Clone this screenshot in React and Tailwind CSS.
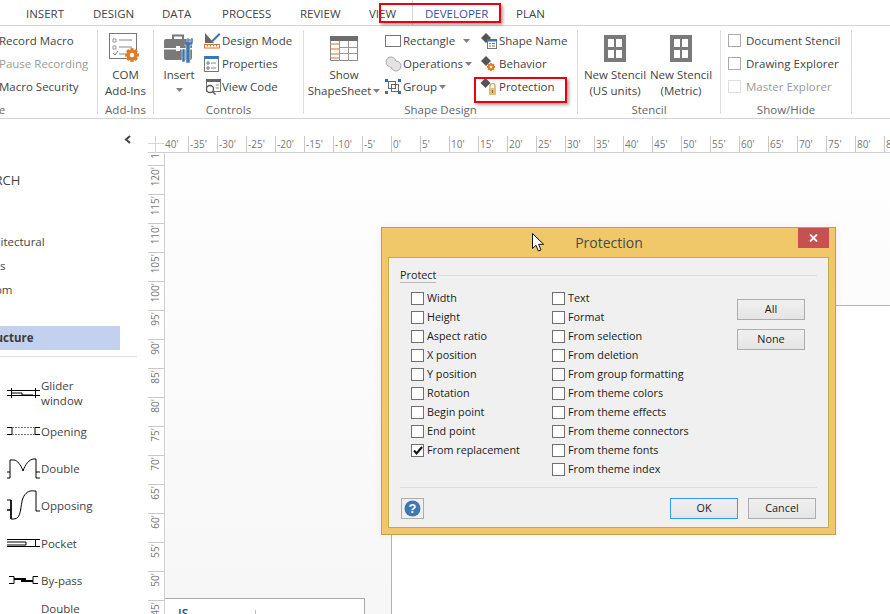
import React from "react";

const ui = { fontFamily: '"Open Sans","Noto Sans",sans-serif' };

function Diamond({ x = 0, y = 0, s = 5, c = "#555" }) {
  return <path d={`M${x} ${y - s}L${x + s} ${y}L${x} ${y + s}L${x - s} ${y}Z`} fill={c} />;
}
function Gear({ cx, cy, r, c = "#e07b28" }) {
  const spokes = [0, 45, 90, 135];
  return (
    <g>
      {spokes.map((a) => (
        <rect key={a} x={cx - r * 0.3} y={cy - r * 1.25} width={r * 0.6} height={r * 2.5} fill={c} transform={`rotate(${a} ${cx} ${cy})`} />
      ))}
      <circle cx={cx} cy={cy} r={r} fill={c} />
      <circle cx={cx} cy={cy} r={r * 0.4} fill="#fff" />
    </g>
  );
}

const ComIcon = () => (
  <svg width="33" height="32" viewBox="0 0 33 32">
    <rect x="0.5" y="0.5" width="27" height="25" fill="#fff" stroke="#777" />
    <path d="M4 6h3v3H4zM4 13h3v3H4z" fill="none" stroke="#999" />
    <path d="M4 20l2 2 3-4" fill="none" stroke="#777" />
    <path d="M10 7h13M10 14h13M10 21h6" stroke="#888" />
    <Gear cx="23" cy="22" r="5.5" />
  </svg>
);
const InsertIcon = () => (
  <svg width="31" height="31" viewBox="0 0 31 31">
    <path d="M9 6V2.5h10V6" fill="none" stroke="#777" strokeWidth="2" />
    <rect x="0" y="6" width="28" height="21" rx="2" fill="#7a7a7a" />
    <rect x="0" y="15" width="28" height="1.5" fill="#fff" />
    <rect x="12" y="13" width="4" height="5" fill="#fff" />
    <path d="M20 12h2v18h4V12h2l1-2V5h-2v4h-2V5h-2v4" fill="#3a78b5" stroke="#fff" strokeWidth="0.5" />
    <rect x="18" y="16" width="3" height="13" fill="#3a78b5" stroke="#fff" strokeWidth="0.5" />
  </svg>
);
const DesignIcon = () => (
  <svg width="17" height="17" viewBox="0 0 17 17">
    <path d="M1 1v10h9Z" fill="#666" />
    <path d="M8 8l7-7 1.5 1.5-7 7L7 10Z" fill="#3a78b5" />
    <rect x="0.5" y="12.5" width="15" height="3.5" fill="#fff" stroke="#d9702a" />
    <path d="M3.5 13v1.5M6.5 13v1.5M9.5 13v1.5M12.5 13v1.5" stroke="#d9702a" />
  </svg>
);
const PropertiesIcon = () => (
  <svg width="15" height="16" viewBox="0 0 15 16">
    <rect x="0.5" y="0.5" width="14" height="15" fill="#fff" stroke="#777" />
    <rect x="0" y="0" width="15" height="3" fill="#3a78b5" />
    <path d="M3 6h2v2H3zM3 11h2v2H3z" fill="none" stroke="#777" />
    <path d="M7 7h5M7 12h5" stroke="#888" />
  </svg>
);
const ViewCodeIcon = () => (
  <svg width="17" height="16" viewBox="0 0 17 16">
    <rect x="2.5" y="0.5" width="14" height="12" fill="#fff" stroke="#777" />
    <rect x="2" y="0" width="15" height="3" fill="#666" />
    <path d="M12 6h3M12 9h3" stroke="#888" />
    <circle cx="6" cy="10" r="3.5" fill="#fff" stroke="#555" strokeWidth="1.3" />
    <path d="M8.5 12.5l3 3" stroke="#555" strokeWidth="1.5" />
  </svg>
);
const SheetIcon = () => (
  <svg width="28" height="25" viewBox="0 0 28 25">
    <rect x="0" y="0" width="28" height="25" fill="#fff" />
    <rect x="0" y="0" width="28" height="5" fill="#6d6d6d" />
    <path d="M0.5 5v19.5h27V5" fill="none" stroke="#888" />
    <path d="M9.5 5v20M18.5 5v20M10 11.5h18M10 17.5h18" stroke="#999" />
    <path d="M1 8h8M1 13h8M1 18h8M1 22h8" stroke="#d9702a" strokeWidth="1" />
  </svg>
);
const RectIcon = () => (
  <svg width="16" height="12" viewBox="0 0 16 12">
    <rect x="0.5" y="0.5" width="15" height="11" fill="#fff" stroke="#777" />
  </svg>
);
const OpsIcon = () => (
  <svg width="17" height="16" viewBox="0 0 17 16">
    <rect x="1" y="1" width="10" height="10" rx="5" fill="#e3e3e3" stroke="#aaa" />
    <rect x="6" y="5" width="10" height="10" rx="5" fill="#e3e3e3" stroke="#aaa" />
    <rect x="5" y="5" width="6" height="6" fill="#e3e3e3" />
  </svg>
);
const GroupIcon = () => (
  <svg width="16" height="15" viewBox="0 0 16 15">
    <rect x="3.5" y="2.5" width="7" height="7" fill="none" stroke="#666" />
    <rect x="6.5" y="5.5" width="7" height="7" fill="none" stroke="#666" />
    <path d="M0 0h3v3H0zM13 0h3v3h-3zM0 12h3v3H0zM13 12h3v3h-3z" fill="#2f6fb5" />
  </svg>
);
const NameIcon = () => (
  <svg width="18" height="16" viewBox="0 0 18 16">
    <Diamond x={6} y={5} s={5} />
    <rect x="7.5" y="6.5" width="9" height="9" fill="#fff" stroke="#777" />
    <rect x="7" y="6" width="10" height="2.5" fill="#3a78b5" />
    <path d="M9 10.5h2M12 10.5h3M9 13h2M12 13h3" stroke="#777" />
  </svg>
);
const BehaviorIcon = () => (
  <svg width="18" height="16" viewBox="0 0 18 16">
    <Diamond x={6} y={5} s={5} />
    <Gear cx="11" cy="11" r="3.2" />
  </svg>
);
const LockIcon = () => (
  <svg width="18" height="18" viewBox="0 0 18 18">
    <Diamond x={5.5} y={5} s={5} />
    <path d="M10 10V8a2.5 2.5 0 015 0v2" fill="none" stroke="#b8a070" strokeWidth="1.2" />
    <rect x="9" y="10" width="7" height="7" fill="#e3bf6d" />
    <rect x="12" y="12" width="1" height="3" fill="#8a6f30" />
  </svg>
);
const StencilIcon = () => (
  <svg width="22" height="27" viewBox="0 0 22 27">
    <rect width="22" height="27" fill="#7a7a7a" />
    <path d="M4 4h6v8H4zM12 4h6v8h-6zM4 15h6v8H4zM12 15h6v8h-6z" fill="#fff" />
  </svg>
);

const Caret = ({ className = "" }) => (
  <svg width="7" height="4" viewBox="0 0 7 4" className={className}>
    <path d="M0 0h7L3.5 4Z" fill="#808080" />
  </svg>
);

function SmallRow({ icon, children, iconW, disabled, extra }) {
  return (
    <div className={`h-[23px] flex items-center whitespace-nowrap ${disabled ? "text-[#9a9a9a]" : ""}`}>
      {icon && <span className="flex items-center shrink-0" style={{ width: iconW }}>{icon}</span>}
      <span>{children}</span>
      {extra}
    </div>
  );
}

function Group({ w, label, children }) {
  return (
    <div className="shrink-0 h-[84px] mt-[4px] flex flex-col border-r border-[#dcdcdc]" style={{ width: w }}>
      <div className="flex-1 min-h-0 flex">{children}</div>
      <div className="h-[15px] -mb-[3px] flex items-center justify-center text-[#666] text-[11.5px] leading-none">{label}</div>
    </div>
  );
}

function BigBtn({ icon, lines, w, caret, iconH = 37 }) {
  return (
    <div className="flex flex-col items-center shrink-0 leading-[16px]" style={{ width: w }}>
      <div className="flex items-center justify-center" style={{ height: iconH }}>{icon}</div>
      {lines.map((l) => (
        <div key={l} className="whitespace-nowrap">{l}</div>
      ))}
      {caret}
    </div>
  );
}

const topLabels = [];
for (let v = -35; v <= 85; v += 5) topLabels.push(v);
const leftLabels = [];
for (let v = 120; v >= 45; v -= 5) leftLabels.push(v);

const col1 = [
  ["Width"], ["Height"], ["Aspect ratio"], ["X position"], ["Y position"], ["Rotation"], ["Begin point"], ["End point"], ["From replacement", true],
];
const col2 = ["Text", "Format", "From selection", "From deletion", "From group formatting", "From theme colors", "From theme effects", "From theme connectors", "From theme fonts", "From theme index"];

function Check({ label, checked }) {
  return (
    <div className="h-[19px] flex items-center whitespace-nowrap">
      <span className="w-[13px] h-[13px] border border-[#707070] bg-white flex items-center justify-center shrink-0">
        {checked && (
          <svg width="10" height="9" viewBox="0 0 10 9">
            <path d="M1 4.5l2.6 3L9 1" fill="none" stroke="#111" strokeWidth="2" />
          </svg>
        )}
      </span>
      <span className="ml-[3px]">{label}</span>
    </div>
  );
}

function DlgBtn({ children, w = 68, focus }) {
  return (
    <div
      className={`h-[21px] flex items-center justify-center border bg-linear-to-b from-[#f0f0f0] to-[#e5e5e5] ${focus ? "border-[#3399ff]" : "border-[#adadad]"}`}
      style={{ width: w }}
    >
      {children}
    </div>
  );
}

function Stencil({ h, icon, children }) {
  return (
    <div className="flex items-center shrink-0" style={{ height: h }}>
      <span className="w-[41px] flex justify-center pl-[5px] shrink-0">{icon}</span>
      <span className="leading-[15px]">{children}</span>
    </div>
  );
}

export default function App() {
  return (
    <div className="w-[890px] h-[614px] relative overflow-hidden bg-white flex flex-col text-[#444] text-[11.5px]" style={ui}>
      {/* Tabs */}
      <div className="h-[26px] shrink-0 border-b border-[#d4d4d4] flex items-center text-[#444] pl-[26px] whitespace-nowrap">
        <span className="w-[67px] pt-[3px]">INSERT</span>
        <span className="w-[69px] pt-[3px]">DESIGN</span>
        <span className="w-[60px] pt-[3px]">DATA</span>
        <span className="w-[78px] pt-[3px]">PROCESS</span>
        <span className="w-[69px] pt-[3px]">REVIEW</span>
        <span className="w-[43px] pt-[3px]">VIEW</span>
        <span className="w-[104px] text-[#34539f] h-[25px] flex items-center border-l border-[#d4d4d4] pl-[12px] pt-[3px]">DEVELOPER</span>
        <span className="pt-[3px]">PLAN</span>
      </div>

      {/* Ribbon */}
      <div className="h-[93px] shrink-0 border-b border-[#d4d4d4] flex">
        <Group w={98} label={<span className="-ml-[93px]">e</span>}>
          <div className="-mt-[1px] -ml-[1px]">
            <SmallRow>Record Macro</SmallRow>
            <SmallRow disabled>Pause Recording</SmallRow>
            <SmallRow>Macro Security</SmallRow>
          </div>
        </Group>
        <Group w={56} label="Add-Ins">
          <BigBtn w={55} icon={<ComIcon />} lines={["COM", "Add-Ins"]} />
        </Group>
        <Group w={150} label="Controls">
          <BigBtn w={50} icon={<InsertIcon />} lines={["Insert"]} caret={<Caret className="mt-[5px]" />} />
          <div className="-mt-[1px]">
            <SmallRow icon={<DesignIcon />} iconW={18}>Design Mode</SmallRow>
            <SmallRow icon={<PropertiesIcon />} iconW={18}>Properties</SmallRow>
            <SmallRow icon={<ViewCodeIcon />} iconW={18}>View Code</SmallRow>
          </div>
        </Group>
        <Group w={274} label="Shape Design">
          <BigBtn
            w={80}
            icon={<SheetIcon />}
            lines={["Show"]}
            caret={
              <div className="flex items-center whitespace-nowrap">
                ShapeSheet<Caret className="ml-[2px]" />
              </div>
            }
          />
          <div className="w-[96px] -mt-[1px] pl-[1px]">
            <SmallRow icon={<RectIcon />} iconW={18} extra={<Caret className="ml-[8px]" />}>Rectangle</SmallRow>
            <SmallRow icon={<OpsIcon />} iconW={18} extra={<Caret className="ml-[2px]" />}>Operations</SmallRow>
            <SmallRow icon={<GroupIcon />} iconW={18} extra={<Caret className="ml-[2px]" />}>Group</SmallRow>
          </div>
          <div className="-mt-[1px]">
            <SmallRow icon={<NameIcon />} iconW={19}>Shape Name</SmallRow>
            <SmallRow icon={<BehaviorIcon />} iconW={19}>Behavior</SmallRow>
            <SmallRow icon={<LockIcon />} iconW={19}>Protection</SmallRow>
          </div>
        </Group>
        <Group w={143} label="Stencil">
          <div className="flex pl-[4px]">
            <BigBtn w={66} icon={<StencilIcon />} lines={["New Stencil", "(US units)"]} />
            <BigBtn w={66} icon={<StencilIcon />} lines={["New Stencil", "(Metric)"]} />
          </div>
        </Group>
        <Group w={131} label="Show/Hide">
          <div className="pl-[7px] -mt-[1px]">
            {[
              ["Document Stencil", false],
              ["Drawing Explorer", false],
              ["Master Explorer", true],
            ].map(([t, d]) => (
              <div key={t} className={`h-[23px] flex items-center whitespace-nowrap ${d ? "text-[#9a9a9a]" : ""}`}>
                <span className={`w-[13px] h-[13px] border ${d ? "border-[#dedede]" : "border-[#ababab]"} mr-[5px]`} />
                {t}
              </div>
            ))}
          </div>
        </Group>
      </div>

      {/* Main */}
      <div className="flex-1 min-h-0 flex">
        {/* Stencil pane */}
        <div className="w-[148px] shrink-0 flex flex-col overflow-hidden text-[#444]">
          <div className="h-[27px] shrink-0 pr-[16px] flex items-end justify-end pb-[2px]">
            <svg width="8" height="9" viewBox="0 0 8 9">
              <path d="M6 1L2 4.5 6 8" fill="none" stroke="#444" strokeWidth="2" />
            </svg>
          </div>
          <div className="h-[24px] shrink-0 mt-[23px] flex items-center text-[13px] -ml-[28px]">SEARCH</div>
          <div className="h-[24px] shrink-0 mt-[37px] flex items-center -ml-[24px] whitespace-nowrap">Architectural</div>
          <div className="h-[24px] shrink-0 flex items-center -ml-[27px]">Doors</div>
          <div className="h-[24px] shrink-0 flex items-center -ml-[29px]">Custom</div>
          <div className="h-[24px] shrink-0 mt-[24px] w-[120px] bg-[#c3d0f0] flex items-center font-bold text-[#3c3c3c] overflow-hidden whitespace-nowrap">
            <span className="-ml-[21px]">Structure</span>
          </div>
          <div className="h-[1px] w-[137px] mt-[6px] bg-[#dcdcdc] shrink-0" />
          <div className="pt-[21px] shrink-0 flex flex-col">
            <Stencil h={30} icon={<svg width="33" height="10" viewBox="0 0 33 10"><path d="M0 2.5h33M0 7.5h33M4.5 0v10M28.5 0v10M4 5h11v2h11" fill="none" stroke="#000" /></svg>}>Glider<br />window</Stencil>
            <div className="h-[13px] shrink-0" />
            <Stencil h={20} icon={<svg width="33" height="8" viewBox="0 0 33 8"><path d="M0 .5h5v7H0M33 .5h-5v7h5" fill="none" stroke="#000" /><path d="M5 .5h23M5 7.5h23" stroke="#777" strokeDasharray="2 1" /></svg>}>Opening</Stencil>
            <div className="h-[17px] shrink-0" />
            <Stencil h={20} icon={<svg width="33" height="22" viewBox="0 0 33 22"><path d="M0 21h3v-6H0M3 15V3h4C10 3 14 8 16 14 18 8 22 2 27 2h2v13M33 21h-4v-6h4" fill="none" stroke="#000" /></svg>}>Double</Stencil>
            <div className="h-[17px] shrink-0" />
            <Stencil h={20} icon={<svg width="33" height="30" viewBox="0 0 33 30"><path d="M0 10h4v19h3c8 0 6-14 9-21 2-5 6-8 11-7h2v20h4" fill="none" stroke="#000" /><path d="M0 20h4M4 10v19" stroke="#000" strokeWidth="1.5" /></svg>}>Opposing</Stencil>
            <div className="h-[18px] shrink-0" />
            <Stencil h={20} icon={<svg width="33" height="8" viewBox="0 0 33 8"><path d="M0 .5h33M0 7.5h33M28.5 0v8M0 3h19v3H0" fill="none" stroke="#000" /></svg>}>Pocket</Stencil>
            <div className="h-[17px] shrink-0" />
            <Stencil h={20} icon={<svg width="33" height="8" viewBox="0 0 33 8"><path d="M2 .5h5v7H2M31 .5h-5v7h5" fill="none" stroke="#000" /><path d="M7 3h12M14 5h12" stroke="#000" strokeWidth="2" /></svg>}>By-pass</Stencil>
            <div className="h-[8px] shrink-0" />
            <Stencil h={20} icon={<svg width="33" height="12" viewBox="0 0 33 12" className="mt-[12px]"><ellipse cx="9" cy="10" rx="3" ry="1.5" /><ellipse cx="22" cy="10" rx="3" ry="1.5" /></svg>}>Double</Stencil>
          </div>
        </div>

        {/* Rulers and canvas */}
        <div className="flex-1 min-w-0 flex flex-col pt-[17px]">
          <div className="h-[17px] shrink-0 flex border-b border-[#d0d0d0] text-[10px] text-[#777] leading-none overflow-hidden">
            <div className="w-[16px] shrink-0 relative">
              <div className="absolute left-0 right-0 top-[7px] h-[1px] bg-[#cdd6f0]" />
              <div className="absolute top-0 bottom-0 left-[7px] w-[1px] bg-[#cdd6f0]" />
            </div>
            <div className="w-[24px] shrink-0 pl-[1px] pt-[3px]">40'</div>
            {topLabels.map((v) => (
              <div key={v} className="w-[29px] shrink-0 border-l border-[#c8c8c8] pl-[1px] pt-[3px]">{v}'</div>
            ))}
          </div>
          <div className="flex-1 min-h-0 flex">
            <div className="w-[17px] shrink-0 border-r border-[#d0d0d0] text-[10px] text-[#777] leading-none overflow-hidden">
              <div className="h-[13px] border-b border-[#c8c8c8] flex justify-center items-start overflow-hidden pr-[2px]">
                <span className="[writing-mode:vertical-rl] rotate-180">1</span>
              </div>
              {leftLabels.map((v) => (
                <div key={v} className="h-[29px] border-b border-[#c8c8c8] flex justify-center items-start pt-[1px] pr-[2px]">
                  <span className="[writing-mode:vertical-rl] rotate-180">{v}'</span>
                </div>
              ))}
            </div>
            <div className="flex-1 min-w-0 relative flex flex-col pl-[226px] pt-[152px] bg-linear-to-b from-[#fefefe] to-[#f7f7f7]">
              <div className="flex-1 bg-white border-l border-t border-[#b4b4b4]" />
              <div className="absolute left-0 top-[445px] w-[200px] h-[30px] bg-white border-t border-r border-[#aaaaaa]">
                <span className="absolute left-[13px] top-[9px] text-[12px] font-semibold text-[#2b4fa0] leading-none">IS</span>
                <span className="absolute left-[90px] top-[11px] h-[10px] w-[1px] bg-[#bbb]" />
              </div>
            </div>
          </div>
        </div>
      </div>

      {/* Red callouts */}
      <div className="absolute left-[379px] top-[3px] w-[122px] h-[20px] border-2 border-[#e60012] shadow-[2px_2px_3px_rgba(0,0,0,0.35)]" />
      <div className="absolute left-[474px] top-[77px] w-[93px] h-[26px] border-2 border-[#e60012] shadow-[2px_2px_3px_rgba(0,0,0,0.35)]" />

      {/* Dialog */}
      <div className="absolute left-[381px] top-[227px] w-[455px] h-[308px] bg-[#f0c869] border border-[#c0a050] flex flex-col text-[10.8px] text-[#1a1a1a] shadow-[0_0_8px_rgba(0,0,0,0.06)]">
        <div className="h-[29px] shrink-0 relative flex items-center justify-center text-[14px] text-[#4a4a4a] pl-[1px]">
          Protection
          <div className="absolute right-[6px] top-0 w-[31px] h-[20px] bg-[#c75050] flex items-center justify-center">
            <svg width="9" height="8" viewBox="0 0 9 8">
              <path d="M1 .5l7 7M8 .5l-7 7" stroke="#fff" strokeWidth="1.8" />
            </svg>
          </div>
        </div>
        <div className="mx-[6px] mb-[6px] flex-1 min-h-0 bg-[#f0f0f0] border border-[#c8a850] px-[11px] flex flex-col">
          <div className="h-[31px] shrink-0 flex items-start pt-[9px]">
            <span className="border-b border-[#b9b9b9] leading-[15px] text-[#222]">Protect</span>
            <div className="flex-1 h-[1px] bg-[#d5dfe5] mt-[8px] ml-[1px]" />
          </div>
          <div className="h-[198px] shrink-0 flex">
            <div className="w-[152px] pl-[11px] shrink-0">
              {col1.map(([l, c]) => (
                <Check key={l} label={l} checked={c} />
              ))}
            </div>
            <div className="w-[185px] shrink-0">
              {col2.map((l) => (
                <Check key={l} label={l} />
              ))}
            </div>
            <div className="flex flex-col gap-[9px] pt-[10px]">
              <DlgBtn>All</DlgBtn>
              <DlgBtn>None</DlgBtn>
            </div>
          </div>
          <div className="h-[1px] bg-[#d5dfe5] shrink-0" />
          <div className="flex items-center pt-[10px] pr-[1px] pl-[1px]">
            <div className="w-[23px] h-[21px] border border-[#adadad] flex items-center justify-center">
              <svg width="17" height="17" viewBox="0 0 17 17">
                <circle cx="8.5" cy="8.5" r="8" fill="#3f77b5" />
                <text x="8.5" y="13" textAnchor="middle" fontSize="13" fontWeight="700" fill="#fff" fontFamily="Liberation Sans, sans-serif">?</text>
              </svg>
            </div>
            <div className="ml-auto flex gap-[10px]">
              <DlgBtn focus>OK</DlgBtn>
              <DlgBtn>Cancel</DlgBtn>
            </div>
          </div>
        </div>
      </div>

      {/* Mouse pointer */}
      <svg className="absolute left-[532px] top-[233px]" width="12" height="20" viewBox="0 0 12 20">
        <path d="M.5.5v15l3.5-3.2 2.4 5.7 2.6-1.1-2.4-5.6h5Z" fill="#fff" stroke="#111" />
      </svg>
    </div>
  );
}
